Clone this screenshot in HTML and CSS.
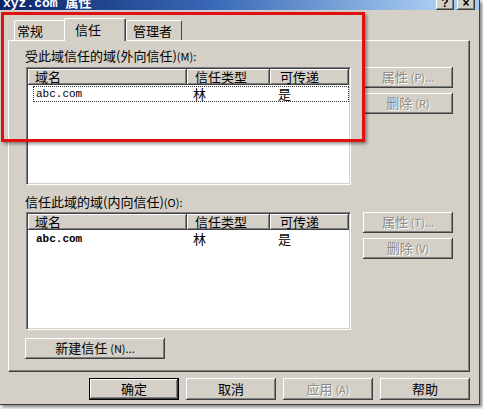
FILE: index.html
```html
<!DOCTYPE html>
<html>
<head>
  <title>xyz.com 属性</title>
  <meta name="viewport" content="width=device-width, initial-scale=1" />
  <link rel="stylesheet" href="styles.css">
</head>
<body>
  <div class="screen">
    <div class="dialog">
      <div class="titlebar">
        <span class="title">xyz.com 属性</span>
        <div class="caption-btns">
          <span class="cap-btn">?</span>
          <span class="cap-btn">×</span>
        </div>
      </div>

      <div class="dialog-body">
        <div class="tabs">
          <div class="tab tab-general">常规</div>
          <div class="tab tab-trust selected">信任</div>
          <div class="tab tab-managed">管理者</div>
        </div>

        <div class="panel">
          <div class="label">受此域信任的域(外向信任)<span class="key">(M):</span></div>
          <div class="section">
            <div class="listview">
              <div class="lv-header">
                <div class="lv-col col-name">域名</div>
                <div class="lv-col col-type">信任类型</div>
                <div class="lv-col col-trans">可传递</div>
              </div>
              <div class="lv-row focused">
                <span class="cell cell-name">abc.com</span>
                <span class="cell cell-type">林</span>
                <span class="cell cell-trans">是</span>
              </div>
            </div>
            <div class="side-btns">
              <div class="btn disabled">属性 <span class="key">(P)...</span></div>
              <div class="btn disabled">删除 <span class="key">(R)</span></div>
            </div>
          </div>

          <div class="label label-second">信任此域的域(内向信任)<span class="key">(O):</span></div>
          <div class="section">
            <div class="listview">
              <div class="lv-header">
                <div class="lv-col col-name">域名</div>
                <div class="lv-col col-type">信任类型</div>
                <div class="lv-col col-trans">可传递</div>
              </div>
              <div class="lv-row">
                <span class="cell cell-name bold">abc.com</span>
                <span class="cell cell-type">林</span>
                <span class="cell cell-trans">是</span>
              </div>
            </div>
            <div class="side-btns">
              <div class="btn disabled">属性 <span class="key">(T)...</span></div>
              <div class="btn disabled">删除 <span class="key">(V)</span></div>
            </div>
          </div>

          <div class="btn btn-new">新建信任 <span class="key">(N)...</span></div>
        </div>

        <div class="footer">
          <div class="btn btn-footer default">确定</div>
          <div class="btn btn-footer">取消</div>
          <div class="btn btn-footer disabled">应用 <span class="key">(A)</span></div>
          <div class="btn btn-footer">帮助</div>
        </div>
      </div>
    </div>

    <div class="highlight"></div>
  </div>
</body>
</html>
```

FILE: styles.css
```css
body {
  margin: 0;
  background: #fff;
  font-family: "Noto Sans CJK SC", "DejaVu Sans", sans-serif;
  font-size: 13px;
  color: #000;
}

.screen {
  position: relative;
  width: 483px;
  height: 409px;
  overflow: hidden;
  background: #f2f2f2;
}

.dialog {
  width: 479px;
  height: 404px;
  background: #d4d0c8;
  border-right: 1px solid #404040;
  border-bottom: 1px solid #404040;
  box-shadow: 2px 2px 3px rgba(0,0,0,0.45);
}

/* title bar, cut off at the top */
.titlebar {
  height: 10px;
  display: flex;
  padding: 0 4px 0 3px;
  background: linear-gradient(to right, #0a246a 0%, #3a6ab8 45%, #a6caf0 90%);
  overflow: hidden;
}

.title {
  display: block;
  margin-top: -3px;
  line-height: 13px;
  font-family: "Liberation Mono", "Noto Sans CJK SC", monospace;
  font-weight: bold;
  font-size: 13px;
  color: #fff;
  white-space: nowrap;
}

.caption-btns {
  display: flex;
  gap: 3px;
  margin-left: auto;
}

.cap-btn {
  width: 18px;
  height: 14px;
  margin-top: -4px;
  box-sizing: border-box;
  background: #d4d0c8;
  box-shadow: inset -1px -1px #404040, inset 1px 1px #fff, inset -2px -2px #808080;
  font-family: "Liberation Sans", sans-serif;
  font-weight: bold;
  font-size: 12px;
  line-height: 14px;
  text-align: center;
}

.dialog-body {
  padding: 0 9px 0 8px;
}

/* tabs */
.tabs {
  height: 30px;
  display: flex;
  align-items: flex-end;
  padding-left: 6px;
}

.tab {
  position: relative;
  height: 20px;
  box-sizing: border-box;
  border-top: 1px solid #fff;
  border-left: 1px solid #fff;
  border-right: 1px solid #404040;
  border-radius: 2px 2px 0 0;
  line-height: 19px;
  white-space: nowrap;
}

.tab-general {
  width: 50px;
  padding-left: 2px;
  border-right: none;
}

.tab-trust {
  width: 62px;
  padding-left: 10px;
}

.tab-managed {
  width: 56px;
  padding-left: 6px;
}

.tab.selected {
  height: 23px;
  margin-bottom: -1px;
  background: #d4d0c8;
  z-index: 1;
  line-height: 21px;
  box-shadow: inset -1px 0 #808080;
}

.panel {
  height: 332px;
  box-sizing: border-box;
  border-top: 1px solid #fff;
  border-left: 1px solid #fff;
  border-right: 1px solid #404040;
  border-bottom: 1px solid #404040;
  box-shadow: inset -1px -1px #808080;
  padding: 7px 0 0 17px;
}

.label {
  height: 15px;
  line-height: 15px;
  margin: 0 0 4px -1px;
  white-space: nowrap;
}

.label-second {
  margin-top: 9px;
  margin-bottom: 3px;
}

.key {
  font-size: 11px;
}

.section {
  display: flex;
  gap: 12px;
}

/* list view */
.listview {
  width: 325px;
  height: 118px;
  box-sizing: border-box;
  background: #fff;
  border-top: 1px solid #808080;
  border-left: 1px solid #808080;
  border-right: 1px solid #fff;
  border-bottom: 1px solid #fff;
  box-shadow: inset 1px 1px #404040, inset -1px -1px #d4d0c8;
  padding: 1px 1px 0 1px;
}

.lv-header {
  display: flex;
  height: 16px;
}

.lv-col {
  box-sizing: border-box;
  height: 16px;
  background: #d4d0c8;
  box-shadow: inset -1px -1px #404040, inset 1px 1px #fff, inset -2px -2px #808080;
  line-height: 16px;
  white-space: nowrap;
}

.col-name {
  width: 159px;
  padding-left: 7px;
}

.col-type {
  width: 83px;
  padding-left: 8px;
}

.col-trans {
  width: 79px;
  padding-left: 10px;
}

.lv-row {
  display: flex;
  height: 16px;
  box-sizing: border-box;
  margin: 1px 0 0 5px;
  width: 316px;
  border: 1px dotted transparent;
  line-height: 14px;
}

.lv-row.focused {
  border-color: #333;
}

.cell {
  white-space: nowrap;
}

.cell-name {
  width: 154px;
  padding-left: 2px;
  font-family: "Liberation Mono", monospace;
  font-size: 11px;
}

.cell-name.bold {
  font-weight: bold;
}

.cell-type {
  width: 83px;
  padding-left: 3px;
  box-sizing: border-box;
}

.cell-trans {
  padding-left: 5px;
}

/* buttons */
.side-btns {
  display: flex;
  flex-direction: column;
  gap: 5px;
}

.btn {
  width: 90px;
  height: 21px;
  box-sizing: border-box;
  background: #d4d0c8;
  box-shadow: inset -1px -1px #404040, inset 1px 1px #fff, inset -2px -2px #808080;
  text-align: center;
  line-height: 20px;
  white-space: nowrap;
}

.btn.disabled {
  color: #8c8a84;
  text-shadow: 1px 1px #fff;
}

.btn-new {
  width: 140px;
  margin: 8px 0 0 -1px;
}

.footer {
  display: flex;
  justify-content: flex-end;
  gap: 7px;
  padding-top: 6px;
}

.btn-footer {
  height: 22px;
  line-height: 21px;
}

.btn.default {
  border: 1px solid #000;
  line-height: 19px;
}

/* red annotation box */
.highlight {
  position: absolute;
  left: 1px;
  top: 12px;
  width: 358px;
  height: 124px;
  border: 3px solid #e01010;
  box-shadow: 2px 2px 3px rgba(0,0,0,0.4);
}
```
